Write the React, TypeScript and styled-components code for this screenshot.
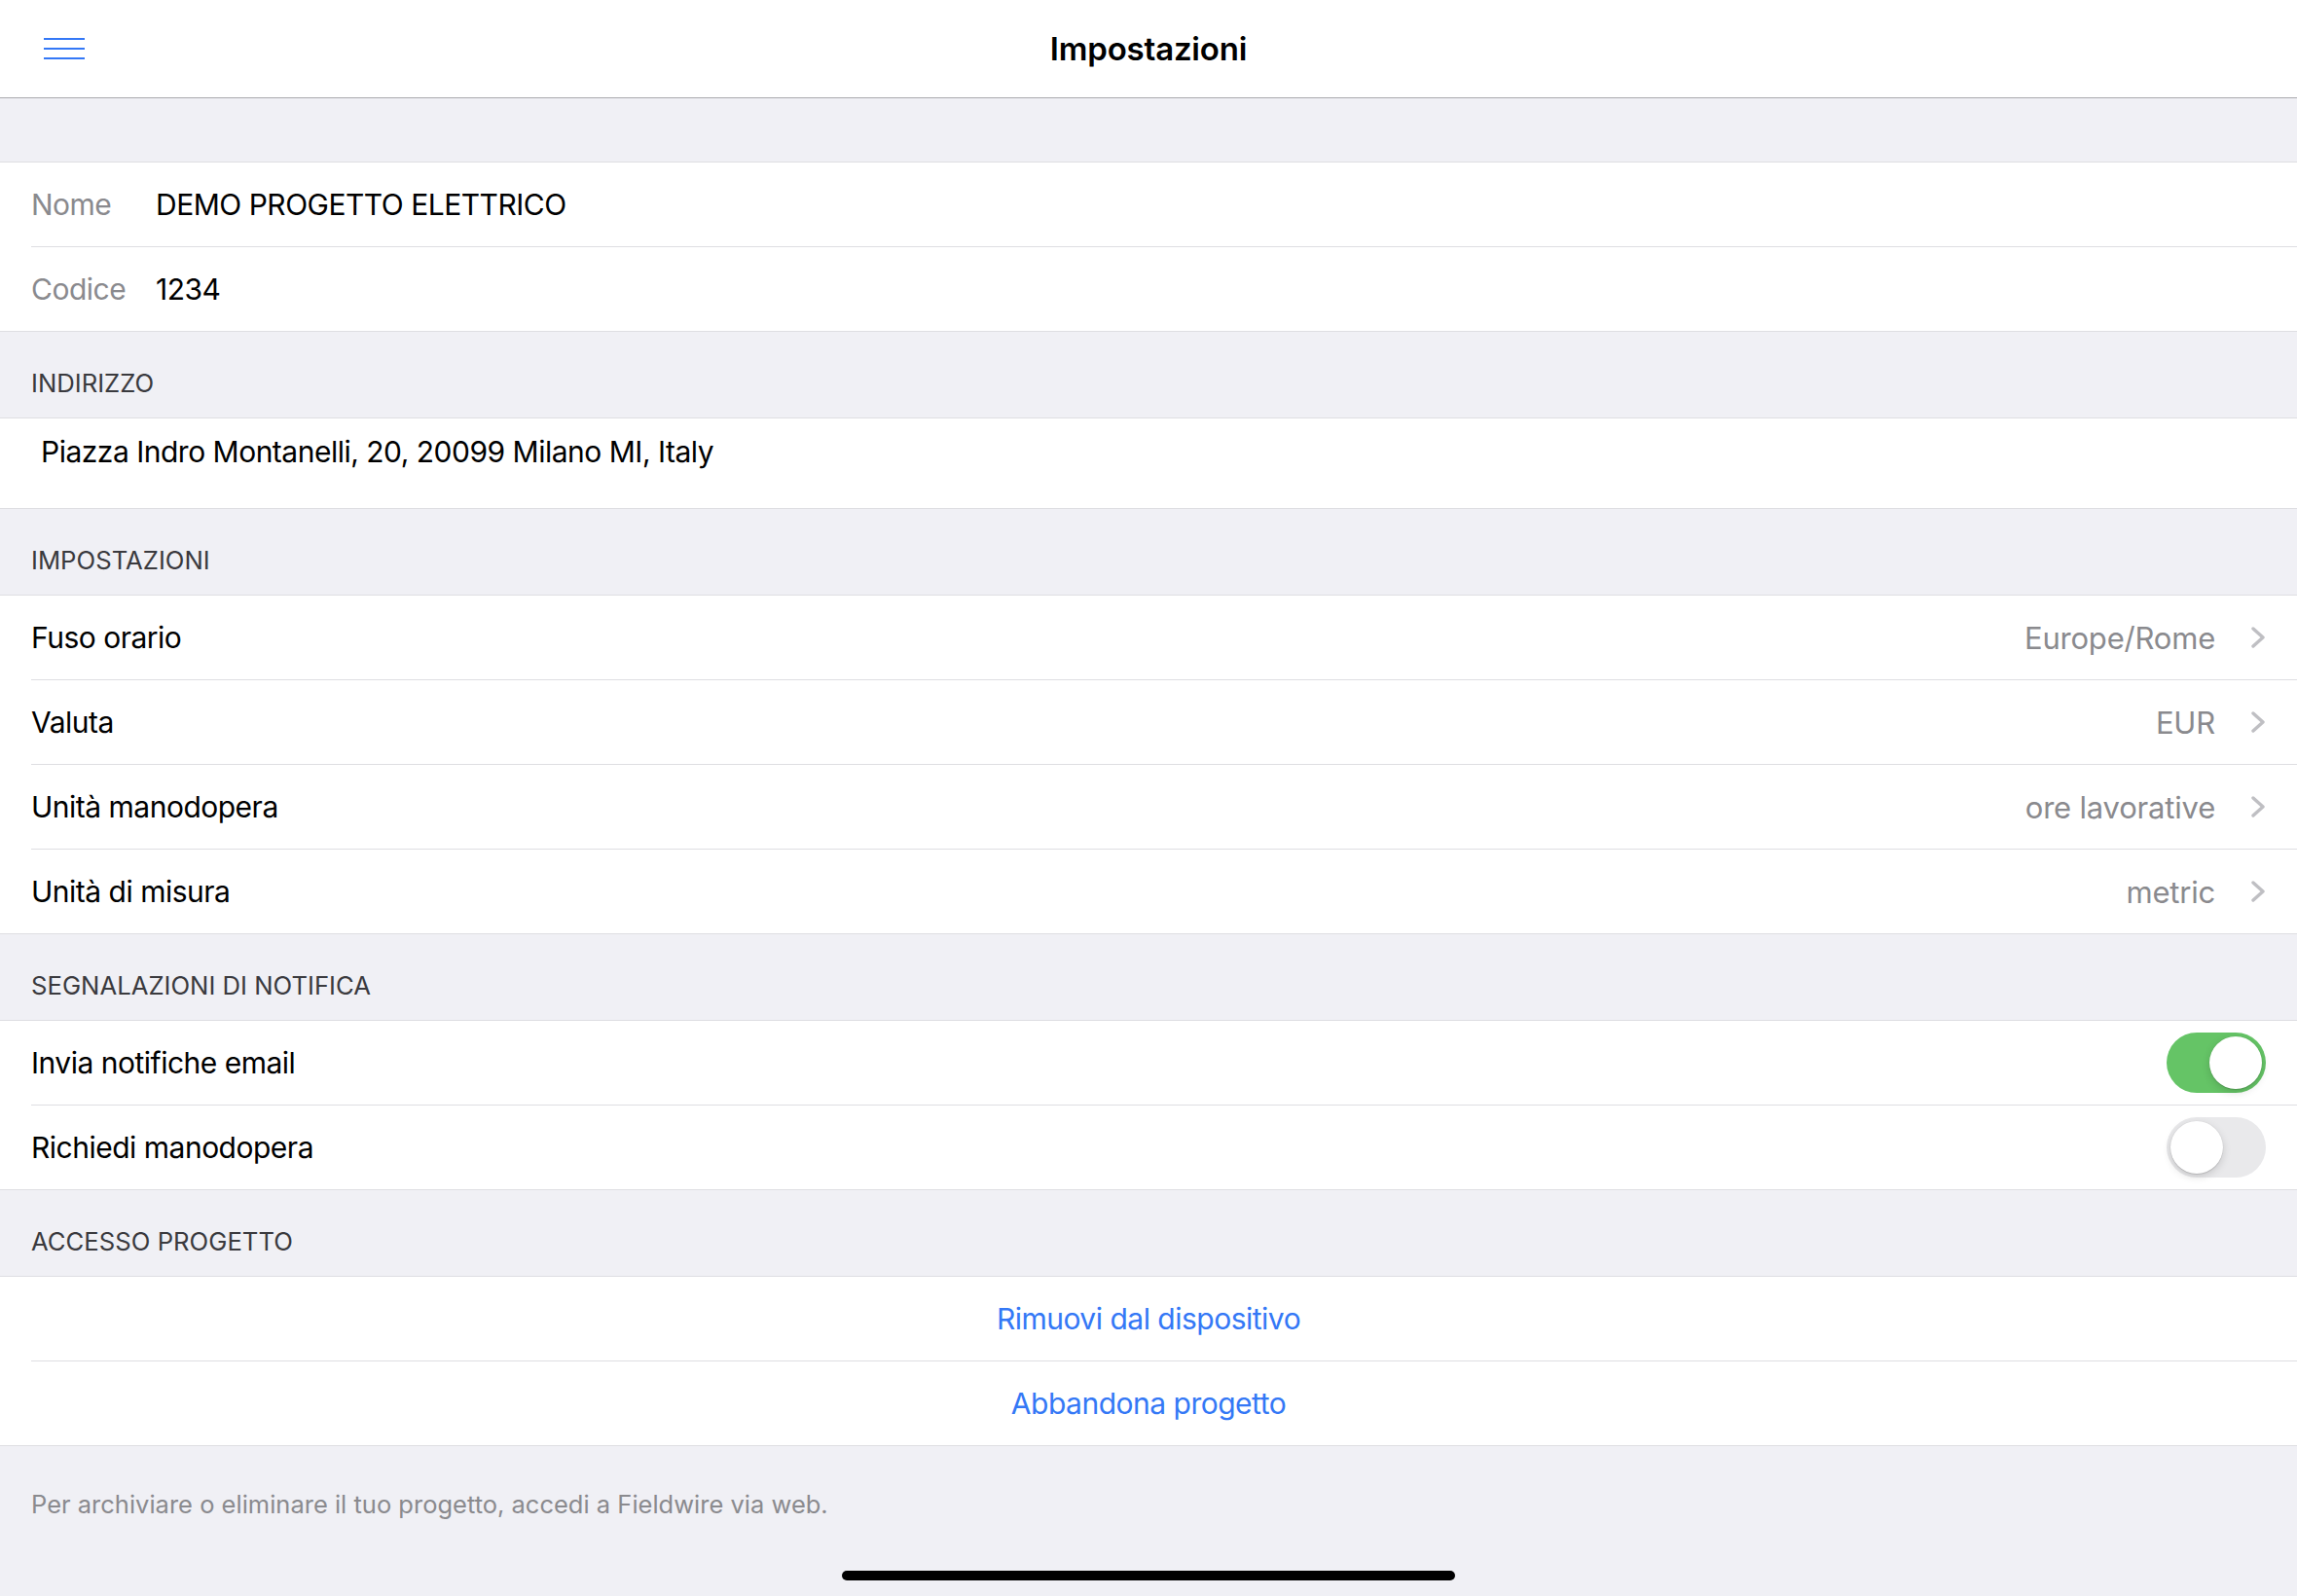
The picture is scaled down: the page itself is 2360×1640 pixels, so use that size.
import React from "react";
import styled, { createGlobalStyle } from "styled-components";

const GlobalStyle = createGlobalStyle`
  html, body {
    margin: 0;
    padding: 0;
    background: #f0f0f5;
  }
  body {
    font-family: Inter, "Noto Sans", "Liberation Sans", sans-serif;
    -webkit-font-smoothing: antialiased;
  }
  * { box-sizing: border-box; }
`;

const Page = styled.div`
  position: relative;
  width: 2360px;
  min-height: 1640px;
  background: #f0f0f5;
  display: flex;
  flex-direction: column;
`;

const NavBar = styled.header`
  height: 101px;
  background: #ffffff;
  border-bottom: 1px solid #a9a9ad;
  display: grid;
  grid-template-columns: 1fr auto 1fr;
  align-items: center;
  padding: 0 45px;
`;

const MenuButton = styled.button`
  justify-self: start;
  border: none;
  background: none;
  padding: 0;
  width: 42px;
  height: 22px;
  display: flex;
  cursor: pointer;
`;

const Title = styled.h1`
  margin: 0;
  font-size: 33px;
  font-weight: 600;
  color: #000;
  letter-spacing: -0.2px;
`;

const TopGap = styled.div`
  height: 65px;
`;

const Section = styled.section`
  background: #ffffff;
  border-top: 1px solid #dedee2;
  border-bottom: 1px solid #dedee2;
`;

const GroupHeader = styled.div`
  height: 88px;
  display: flex;
  align-items: flex-end;
  padding: 0 32px 19px;
  font-size: 25.7px;
  line-height: 32px;
  color: #3a3a3e;
  text-transform: uppercase;
`;

const Row = styled.div`
  padding-left: 32px;
`;

const RowInner = styled.div<{ $last?: boolean; $height?: number; $align?: string }>`
  height: ${(p) => (p.$last ? p.$height ?? 86 : (p.$height ?? 86) + 1)}px;
  border-bottom: ${(p) => (p.$last ? "none" : "1px solid #dedee2")};
  display: flex;
  align-items: ${(p) => p.$align ?? "center"};
  padding-right: 32px;
  font-size: 30px;
  color: #000;
  letter-spacing: -0.5px;
`;

const FieldLabel = styled.span`
  width: 128px;
  color: #8a8a8e;
`;

const FieldValue = styled.span`
  color: #000;
`;

const AddressText = styled.span`
  padding: 16px 0 0 10px;
  line-height: 36px;
`;

const Label = styled.span`
  flex: 1;
`;

const Detail = styled.span`
  color: #8a8a8e;
  margin-right: 36px;
  font-size: 31px;
  letter-spacing: -0.2px;
`;

const Chevron = styled.svg`
  width: 16px;
  height: 22px;
  flex: none;
`;

const ActionRow = styled(RowInner)`
  justify-content: center;
  padding-right: 32px;
  color: #3478f6;
`;

const SwitchTrack = styled.div<{ $on: boolean }>`
  position: relative;
  width: 102px;
  height: 62px;
  border-radius: 31px;
  background: ${(p) => (p.$on ? "#65c466" : "#e9e9eb")};
  flex: none;
`;

const SwitchThumb = styled.div<{ $on: boolean }>`
  position: absolute;
  top: 4px;
  left: ${(p) => (p.$on ? "44px" : "4px")};
  width: 54px;
  height: 54px;
  border-radius: 50%;
  background: #ffffff;
  box-shadow: 0 3px 8px rgba(0, 0, 0, 0.15), 0 1px 1px rgba(0, 0, 0, 0.12), 0 0 0 0.5px rgba(0,0,0,0.04);
`;

const Footer = styled.div`
  flex: 1;
  padding: 45px 32px 0;
  font-size: 25.5px;
  line-height: 30px;
  color: #8a8a8e;
`;

const HomeIndicator = styled.div`
  position: absolute;
  left: 865px;
  bottom: 16px;
  width: 630px;
  height: 10px;
  border-radius: 5px;
  background: #000;
`;

const ChevronIcon = () => (
  <Chevron viewBox="0 0 16 22">
    <polyline points="3,2 13,11 3,20" fill="none" stroke="#bfbfc3" strokeWidth="3.4" strokeLinecap="round" strokeLinejoin="round" />
  </Chevron>
);

const Switch = ({ on }: { on: boolean }) => (
  <SwitchTrack $on={on}>
    <SwitchThumb $on={on} />
  </SwitchTrack>
);

const settings = [
  { label: "Fuso orario", value: "Europe/Rome" },
  { label: "Valuta", value: "EUR" },
  { label: "Unità manodopera", value: "ore lavorative" },
  { label: "Unità di misura", value: "metric" },
];

const toggles = [
  { label: "Invia notifiche email", on: true },
  { label: "Richiedi manodopera", on: false },
];

const actions = ["Rimuovi dal dispositivo", "Abbandona progetto"];

export default function App() {
  return (
    <Page>
      <GlobalStyle />
      <NavBar>
        <MenuButton aria-label="Menu">
          <svg width="42" height="22" viewBox="0 0 42 22">
            <line x1="0" y1="1" x2="42" y2="1" stroke="#3478f6" strokeWidth="2" />
            <line x1="0" y1="11" x2="42" y2="11" stroke="#3478f6" strokeWidth="2" />
            <line x1="0" y1="21" x2="42" y2="21" stroke="#3478f6" strokeWidth="2" />
          </svg>
        </MenuButton>
        <Title>Impostazioni</Title>
        <span />
      </NavBar>
      <TopGap />
      <Section>
        <Row>
          <RowInner>
            <FieldLabel>Nome</FieldLabel>
            <FieldValue>DEMO PROGETTO ELETTRICO</FieldValue>
          </RowInner>
        </Row>
        <Row>
          <RowInner $last>
            <FieldLabel>Codice</FieldLabel>
            <FieldValue>1234</FieldValue>
          </RowInner>
        </Row>
      </Section>
      <GroupHeader>Indirizzo</GroupHeader>
      <Section>
        <Row>
          <RowInner $last $height={92} $align="flex-start">
            <AddressText>Piazza Indro Montanelli, 20, 20099 Milano MI, Italy</AddressText>
          </RowInner>
        </Row>
      </Section>
      <GroupHeader>Impostazioni</GroupHeader>
      <Section>
        {settings.map((s, i) => (
          <Row key={s.label}>
            <RowInner $last={i === settings.length - 1}>
              <Label>{s.label}</Label>
              <Detail>{s.value}</Detail>
              <ChevronIcon />
            </RowInner>
          </Row>
        ))}
      </Section>
      <GroupHeader>Segnalazioni di notifica</GroupHeader>
      <Section>
        {toggles.map((t, i) => (
          <Row key={t.label}>
            <RowInner $last={i === toggles.length - 1}>
              <Label>{t.label}</Label>
              <Switch on={t.on} />
            </RowInner>
          </Row>
        ))}
      </Section>
      <GroupHeader>Accesso progetto</GroupHeader>
      <Section>
        {actions.map((a, i) => (
          <Row key={a}>
            <ActionRow $last={i === actions.length - 1}>{a}</ActionRow>
          </Row>
        ))}
      </Section>
      <Footer>Per archiviare o eliminare il tuo progetto, accedi a Fieldwire via web.</Footer>
      <HomeIndicator />
    </Page>
  );
}
